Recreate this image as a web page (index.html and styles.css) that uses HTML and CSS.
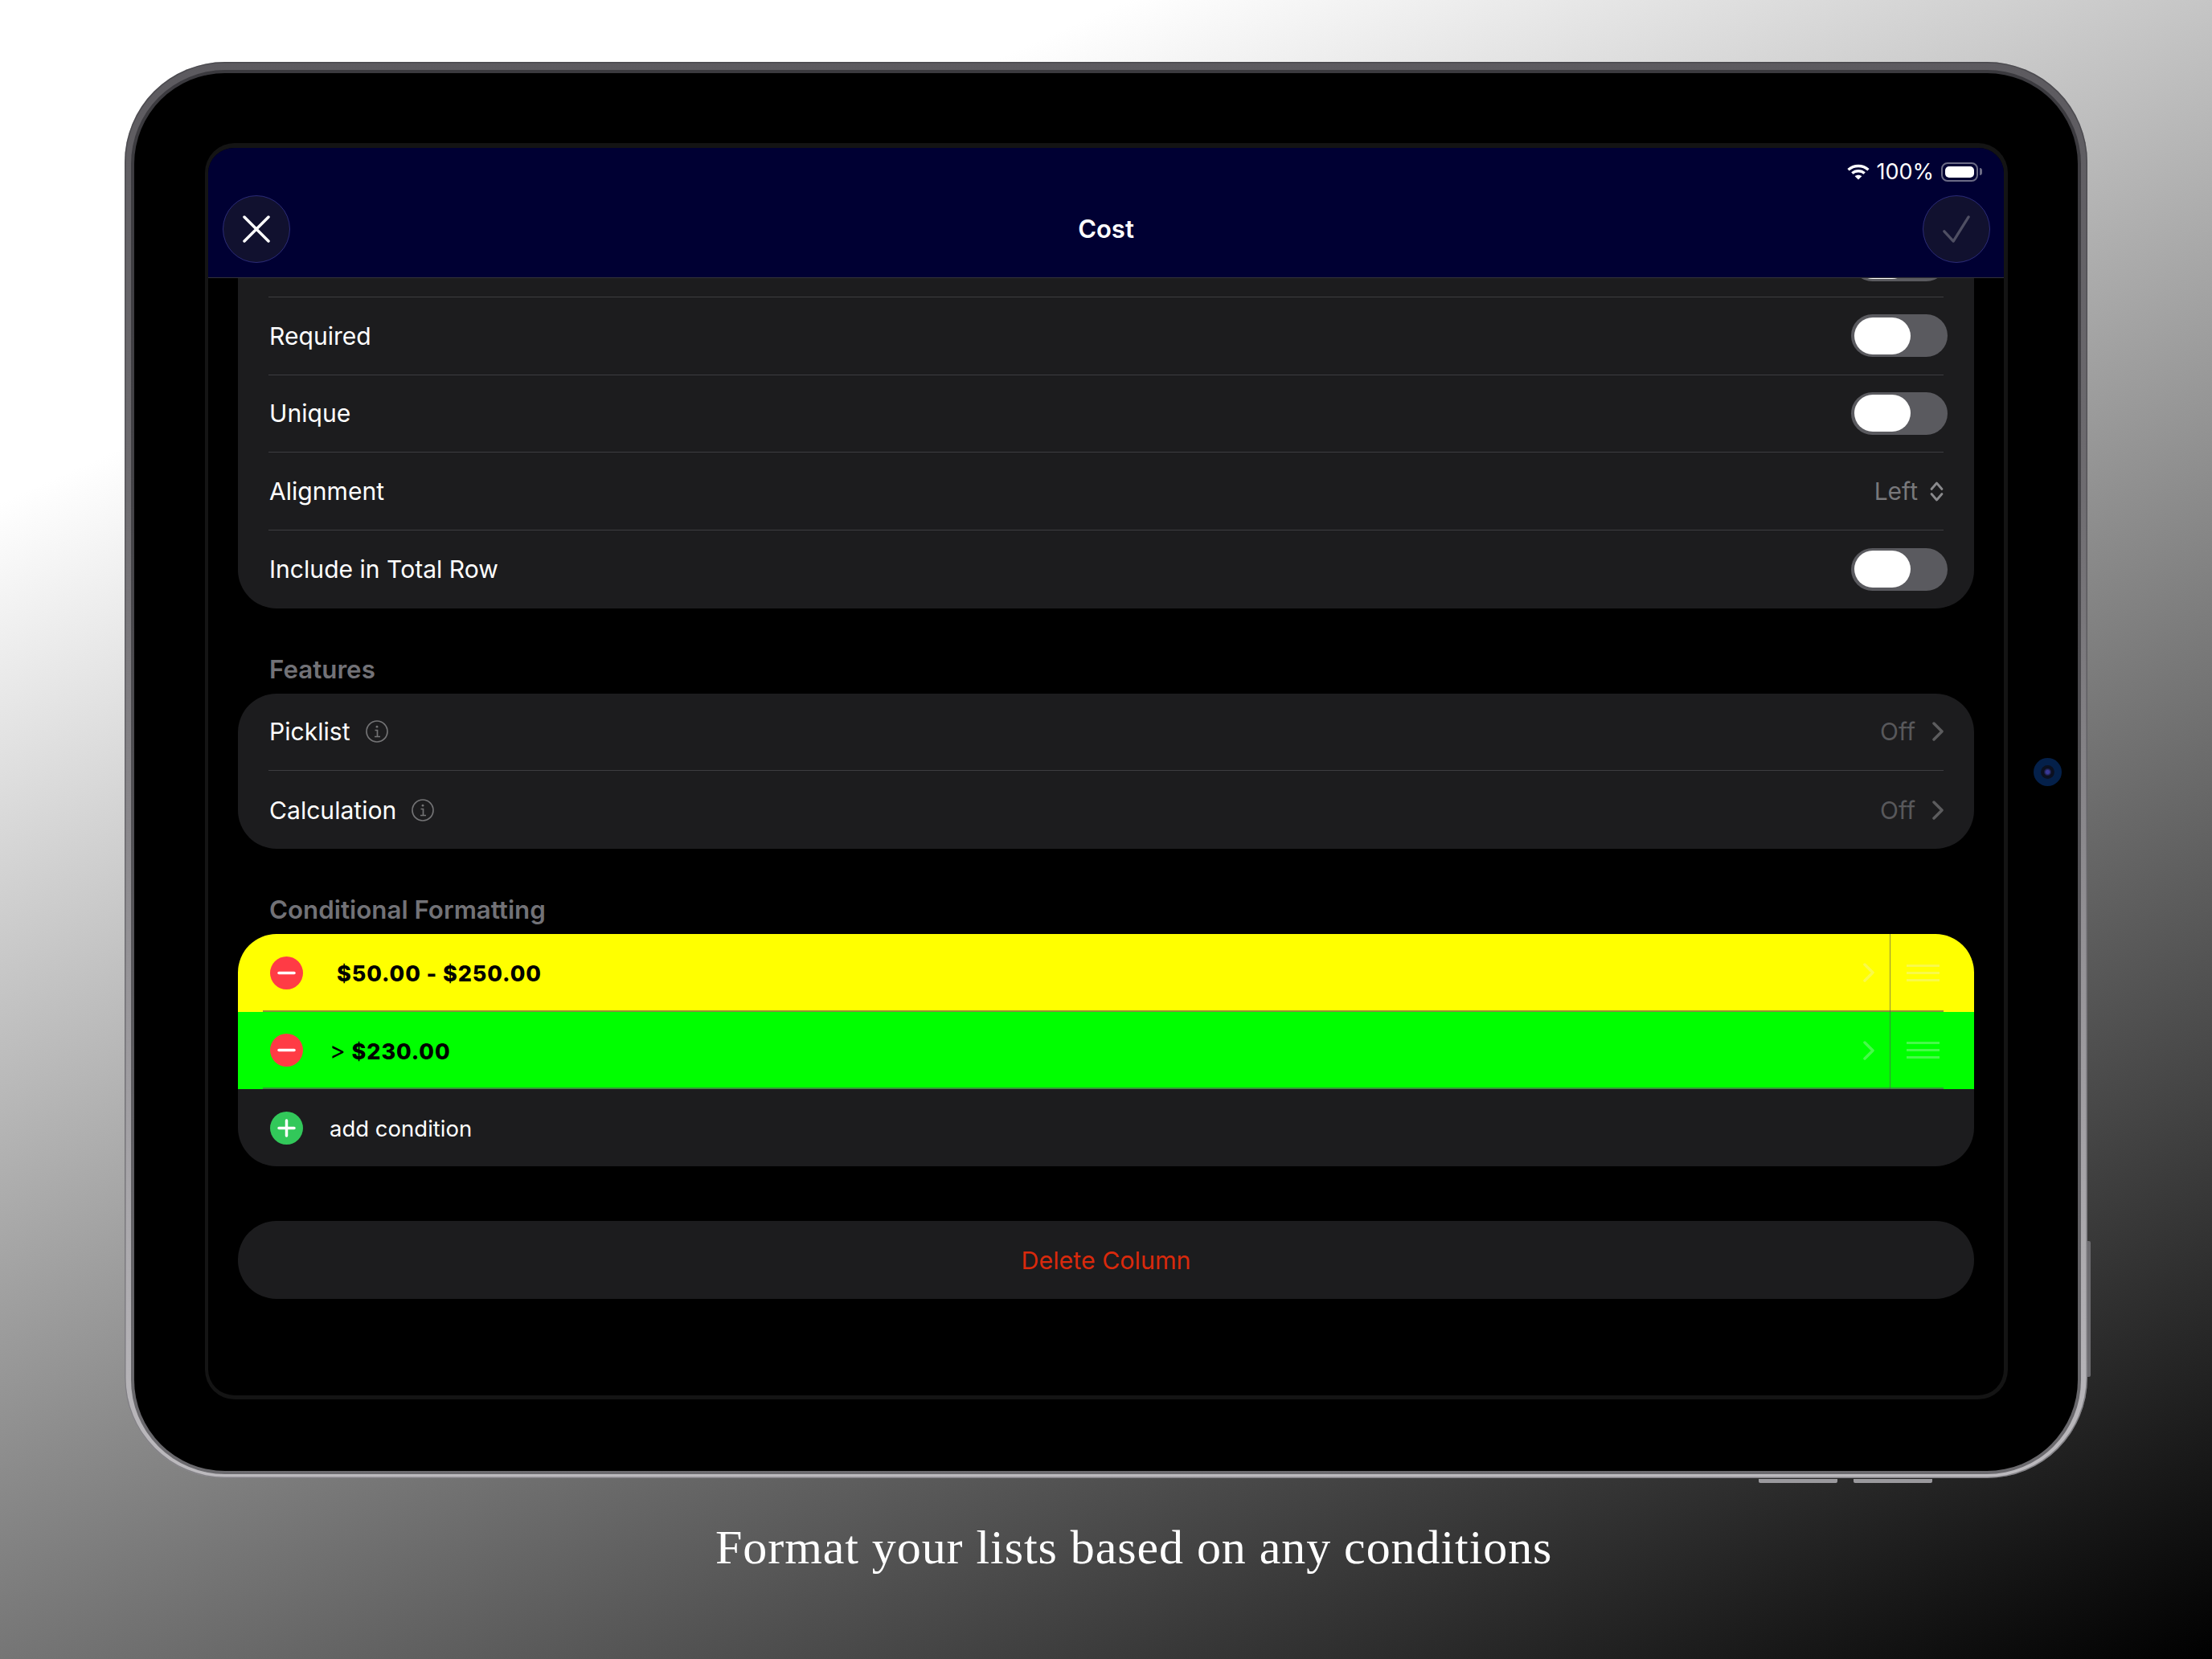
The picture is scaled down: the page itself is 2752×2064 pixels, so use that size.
FILE: index.html
```html
<!DOCTYPE html>
<html lang="en">
<head>
<meta charset="utf-8">
<title>Format your lists</title>
<link rel="stylesheet" href="styles.css">
</head>
<body>
<main class="page">
  <div class="device">
    <span class="side-button"></span>
    <span class="bottom-button bottom-button-a"></span>
    <span class="bottom-button bottom-button-b"></span>
    <div class="bezel">
      <span class="camera"><span class="lens"></span></span>
      <div class="screen">
        <header class="nav">
          <div class="status">
            <svg class="wifi" viewBox="0 0 28 20" aria-hidden="true"><path d="M1.500 7.200C8.500.9 19.500.9 26.500 7.200" /><path d="M6.300 11.600c4.400-3.900 11-3.900 15.400 0" /><path class="wifi-dot" d="M14 19.600l-4.300-4.400c2.500-2 6.100-2 8.600 0z" /></svg>
            <span class="status-text">100%</span>
            <span class="battery"><span class="battery-fill"></span></span>
            <span class="battery-tip"></span>
          </div>
          <div class="nav-row">
            <button class="round-button" type="button" aria-label="Close">
              <svg class="nav-icon" viewBox="0 0 34 34"><path d="M2 2L32 32M32 2L2 32" /></svg>
            </button>
            <h1 class="title">Cost</h1>
            <button class="round-button round-button-off" type="button" aria-label="Done">
              <svg class="nav-icon" viewBox="0 0 36 36"><path d="M2 21L14 34L34 2" /></svg>
            </button>
          </div>
        </header>
        <div class="content">
          <section class="card card-scrolled">
            <div class="row row-peek"><span class="toggle"><span class="thumb"></span></span></div>
            <div class="row"><span class="label">Required</span><span class="toggle"><span class="thumb"></span></span></div>
            <div class="row"><span class="label">Unique</span><span class="toggle"><span class="thumb"></span></span></div>
            <div class="row">
              <span class="label">Alignment</span>
              <span class="value value-left">Left
                <svg class="updown" viewBox="0 0 17 25"><path d="M2 9.500L8.500 2L15 9.500M2 15.500L8.500 23L15 15.500" /></svg>
              </span>
            </div>
            <div class="row"><span class="label">Include in Total Row</span><span class="toggle"><span class="thumb"></span></span></div>
          </section>

          <h2 class="section-title">Features</h2>
          <section class="card">
            <div class="row">
              <span class="label-group"><span class="label">Picklist</span>
                <svg class="info" viewBox="0 0 28 28"><circle cx="14" cy="14" r="13" /><path d="M11.500 12.500H14.500V20M11 20.500H18" /><circle class="info-dot" cx="14" cy="8.200" r="1.400" /></svg>
              </span>
              <span class="value">Off <svg class="chevron" viewBox="0 0 14 24"><path d="M2 2L12 12L2 22" /></svg></span>
            </div>
            <div class="row">
              <span class="label-group"><span class="label">Calculation</span>
                <svg class="info" viewBox="0 0 28 28"><circle cx="14" cy="14" r="13" /><path d="M11.500 12.500H14.500V20M11 20.500H18" /><circle class="info-dot" cx="14" cy="8.200" r="1.400" /></svg>
              </span>
              <span class="value">Off <svg class="chevron" viewBox="0 0 14 24"><path d="M2 2L12 12L2 22" /></svg></span>
            </div>
          </section>

          <h2 class="section-title">Conditional Formatting</h2>
          <section class="card">
            <div class="condition condition-yellow">
              <span class="badge badge-remove"><svg viewBox="0 0 41 41"><path d="M11 20.500H30" /></svg></span>
              <span class="condition-text condition-text-range">$50.00 - $250.00</span>
              <svg class="chevron chevron-faint" viewBox="0 0 14 24"><path d="M2 2L12 12L2 22" /></svg>
              <span class="grip"><i></i><i></i><i></i></span>
            </div>
            <div class="condition condition-green">
              <span class="badge badge-remove"><svg viewBox="0 0 41 41"><path d="M11 20.500H30" /></svg></span>
              <span class="condition-text"><span class="operator">&gt;</span> $230.00</span>
              <svg class="chevron chevron-faint" viewBox="0 0 14 24"><path d="M2 2L12 12L2 22" /></svg>
              <span class="grip"><i></i><i></i><i></i></span>
            </div>
            <div class="add-row">
              <span class="badge badge-add"><svg viewBox="0 0 41 41"><path d="M11 20.500H30M20.500 11V30" /></svg></span>
              <span class="add-label">add condition</span>
            </div>
          </section>

          <button class="delete" type="button">Delete Column</button>
        </div>
      </div>
    </div>
  </div>
  <p class="caption">Format your lists based on any conditions</p>
</main>
</body>
</html>
```

FILE: styles.css
```css
* { box-sizing: border-box; }

html, body { margin: 0; height: 100%; }

body {
  width: 2752px;
  height: 2064px;
  overflow: hidden;
  background: linear-gradient(156deg, #fff 19%, #000 100%);
  font-family: Inter, "Liberation Sans", sans-serif;
  color: #fff;
}

.page {
  display: flex;
  flex-direction: column;
  padding: 77px 0 0 155px;
}

.device {
  position: relative;
  display: flex;
  width: 2442px;
  height: 1762px;
  padding: 14px 12px 9px;
  border-radius: 125px;
  background: linear-gradient(#5c5a5f 0, #6e6c70 30%, #a8a6aa 80%, #bcbabe 100%);
  box-shadow: inset 0 0 0 1.500px rgba(50, 50, 55, .4);
}

.side-button {
  position: absolute;
  left: 100%;
  top: 1467px;
  width: 4px;
  height: 169px;
  background: #6c6b6f;
  border-radius: 0 2px 2px 0;
}

.bottom-button {
  position: absolute;
  top: 100%;
  width: 98px;
  height: 5px;
  margin-top: 1px;
  background: #9a999d;
  border-radius: 0 0 2px 2px;
}

.bottom-button-a { left: 2033px; }
.bottom-button-b { left: 2151px; }

.bezel {
  position: relative;
  display: flex;
  flex: 1;
  padding: 87px 87px 89px 88px;
  border-radius: 113px;
  background: #000;
  box-shadow: 0 0 0 4px rgba(25, 25, 30, .5);
}

.camera {
  position: absolute;
  left: 2363px;
  top: 852px;
  display: flex;
  align-items: center;
  justify-content: center;
  width: 35px;
  height: 35px;
  border-radius: 50%;
  background: #04204a;
}

.lens {
  width: 17px;
  height: 17px;
  border-radius: 50%;
  background: radial-gradient(circle, #3a3a98 0 2px, #0b1020 5px);
}

.screen {
  display: flex;
  flex: 1;
  flex-direction: column;
  border: solid #141414;
  border-width: 6px 5px 5px 4px;
  border-radius: 37px;
  overflow: hidden;
  background: #000;
}

.nav {
  position: relative;
  z-index: 1;
  flex: none;
  height: 162px;
  border-bottom: 1px solid #333338;
  background: #000033;
}

.status {
  display: flex;
  align-items: center;
  justify-content: flex-end;
  height: 59px;
  padding: 0 27px 0 0;
}

.wifi { width: 28px; height: 20px; margin-right: 8px; }
.wifi path { fill: none; stroke: #fff; stroke-width: 3.400; }
.wifi .wifi-dot { fill: #fff; stroke: none; }

.status-text {
  margin-right: 9px;
  font-size: 27px;
  line-height: 32px;
}

.battery {
  display: flex;
  width: 46px;
  height: 24px;
  padding: 3px;
  border: 2px solid #6b6b85;
  border-radius: 8px;
}

.battery-fill {
  flex: 1;
  border-radius: 5px;
  background: #fff;
}

.battery-tip {
  width: 3px;
  height: 9px;
  margin-left: 2px;
  border-radius: 0 3px 3px 0;
  background: #6b6b85;
}

.nav-row {
  display: grid;
  grid-template-columns: 84px 1fr 84px;
  align-items: center;
  padding: 0 17px 0 18px;
}

.round-button {
  display: flex;
  align-items: center;
  justify-content: center;
  width: 84px;
  height: 84px;
  padding: 0;
  border: 1.500px solid #2c2c78;
  border-radius: 50%;
  background: #11112f;
}

.nav-icon { width: 34px; height: 34px; }
.nav-icon path {
  fill: none;
  stroke: #fff;
  stroke-width: 3.500;
  stroke-linecap: round;
  stroke-linejoin: round;
}

.round-button-off .nav-icon path { stroke: #4f4f63; }

.title {
  margin: 0 1px 0 0;
  text-align: center;
  font-size: 31px;
  font-weight: 600;
  line-height: 40px;
}

.content {
  display: flex;
  flex: 1;
  flex-direction: column;
  padding: 0 37px;
  overflow: hidden;
}

.card {
  flex: none;
  overflow: hidden;
  border-radius: 48px;
  background: #1c1c1e;
}

.card-scrolled { border-radius: 0 0 48px 48px; }

.row {
  display: flex;
  align-items: center;
  justify-content: space-between;
  height: 96.670px;
  margin: 0 38px;
  border-bottom: 1px solid #3d3d40;
}

.row:last-child { border-bottom: 0; }

.row-peek {
  align-items: flex-end;
  justify-content: flex-end;
  height: 24px;
  padding-bottom: 19px;
  overflow: hidden;
}

.row-peek .toggle { flex: none; }

.label {
  margin-left: 1px;
  font-size: 30.100px;
  line-height: 40px;
}

.label-group {
  display: flex;
  align-items: center;
  gap: 19px;
}

.toggle {
  display: flex;
  align-items: center;
  width: 120px;
  height: 53px;
  margin-right: -5px;
  padding: 0 4px;
  border-radius: 27px;
  background: #5a5a5f;
}

.thumb {
  width: 70px;
  height: 46px;
  border-radius: 23px;
  background: #fff;
}

.value {
  display: flex;
  align-items: center;
  gap: 21px;
  color: #58585b;
  font-size: 30px;
  line-height: 40px;
}

.value-left {
  gap: 15px;
  color: #78787b;
}

.updown { width: 17px; height: 25px; flex: none; }
.updown path {
  fill: none;
  stroke: #8a8a8d;
  stroke-width: 2.800;
  stroke-linecap: round;
  stroke-linejoin: round;
}

.chevron { width: 14px; height: 24px; flex: none; }
.chevron path {
  fill: none;
  stroke: #5c5c5e;
  stroke-width: 3.500;
  stroke-linecap: round;
  stroke-linejoin: round;
}

.chevron-faint path { stroke: rgba(235, 235, 245, .3); }

.info { width: 28px; height: 28px; }
.info circle, .info path {
  fill: none;
  stroke: #737375;
  stroke-width: 1.700;
}
.info .info-dot { fill: #737375; stroke: none; }

.section-title {
  margin: 0;
  padding: 58px 0 12px 39px;
  color: #727277;
  font-size: 31.300px;
  font-weight: 600;
  line-height: 36px;
}

.condition {
  position: relative;
  display: flex;
  align-items: center;
  height: 96.670px;
  padding-left: 40px;
  color: #000;
}

.condition-yellow { background: #ffff00; }
.condition-green { background: #00ff00; }

/* inset row separator, painted over the coloured row */
.condition::after {
  content: "";
  position: absolute;
  left: 31px;
  right: 38px;
  bottom: 0;
  height: 2px;
  background: rgba(84, 84, 88, .65);
}

.badge {
  display: block;
  flex: none;
  width: 41px;
  height: 41px;
  border-radius: 50%;
}

.badge svg { display: block; }
.badge path {
  fill: none;
  stroke: #fff;
  stroke-width: 3.500;
  stroke-linecap: round;
}

.badge-remove { background: #ff3b45; }
.badge-add { background: #32c85a; }

.condition-text {
  flex: 1;
  margin-left: 33px;
  padding-top: 3px;
  font-size: 27px;
  font-weight: 800;
  letter-spacing: .9px;
  line-height: 36px;
}

.condition-text-range { margin-left: 42px; }

.operator {
  font-size: 30px;
  font-weight: 400;
}

.condition .chevron { margin-right: 19px; }

.grip {
  display: flex;
  flex-direction: column;
  align-items: center;
  justify-content: center;
  gap: 6px;
  align-self: stretch;
  width: 105px;
  padding-right: 23px;
  border-left: 1.500px solid rgba(84, 84, 88, .65);
}

.grip i {
  width: 41px;
  height: 3px;
  background: rgba(235, 235, 245, .3);
}

.add-row {
  display: flex;
  align-items: center;
  height: 96px;
  padding-left: 40px;
}

.add-label {
  margin-left: 33px;
  padding-top: 2px;
  font-size: 27.500px;
  line-height: 36px;
}

.delete {
  flex: none;
  height: 97px;
  margin-top: 68px;
  padding: 0;
  border: 0;
  border-radius: 48px;
  background: #1c1c1e;
  color: #d9290c;
  font-family: Inter, sans-serif;
  font-size: 30.400px;
}

.caption {
  align-self: flex-start;
  margin: 51px 0 0 735px;
  color: #fff;
  font-family: "Liberation Serif", serif;
  font-size: 60px;
  letter-spacing: .93px;
  line-height: 70px;
  white-space: nowrap;
}
```
